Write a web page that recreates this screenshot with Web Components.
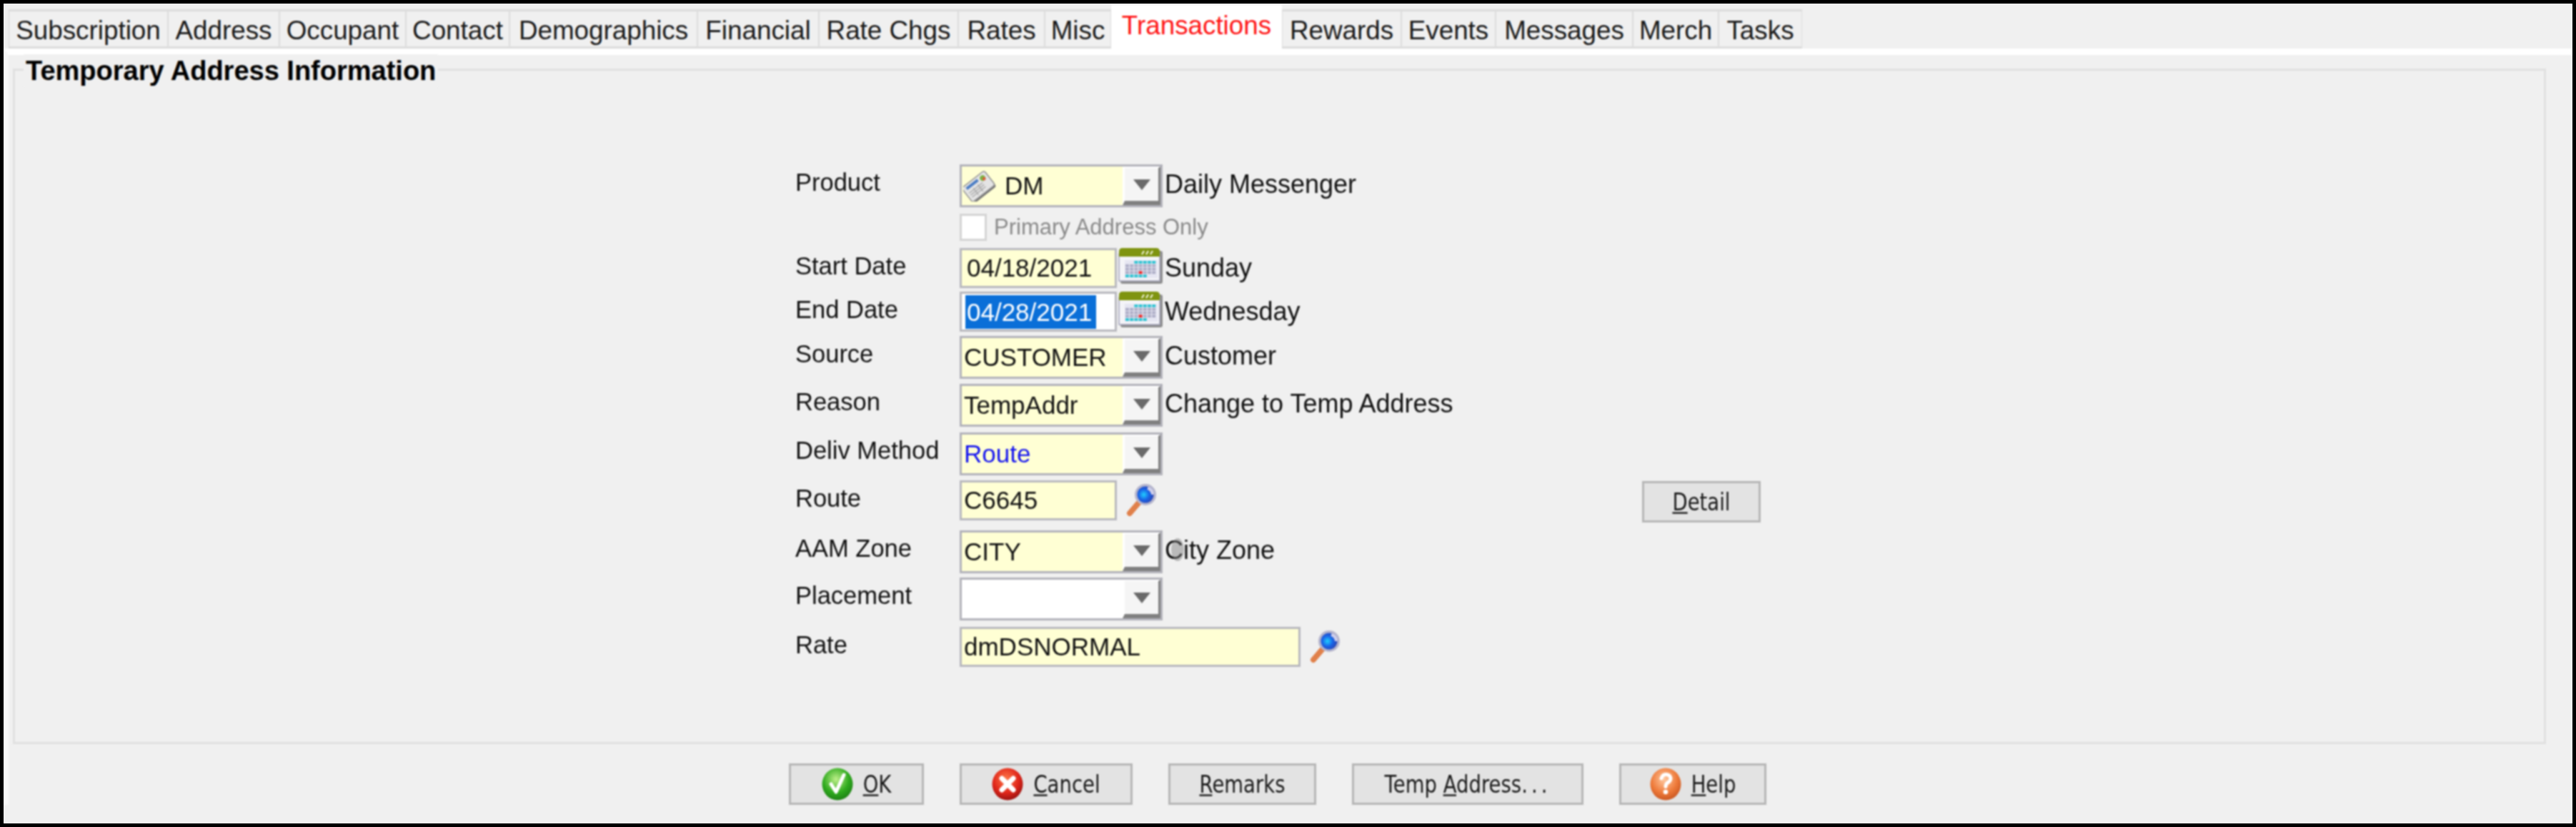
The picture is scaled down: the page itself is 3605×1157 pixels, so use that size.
<!DOCTYPE html>
<html>
<head>
<meta charset="utf-8">
<title>Temporary Address Information</title>
<style>
  html, body { margin: 0; padding: 0; height: 1157px; background: #000; overflow: hidden; }
  body { font-family: "Liberation Sans", Arial, sans-serif; color: #111; }
</style>
</head>
<body>
<sub-window>
  <tab-bar slot="tabs">
    <tab-item style="--w:223px">Subscription</tab-item>
    <tab-item style="--w:156px">Address</tab-item>
    <tab-item style="--w:177px">Occupant</tab-item>
    <tab-item style="--w:145px">Contact</tab-item>
    <tab-item style="--w:263px">Demographics</tab-item>
    <tab-item style="--w:170px">Financial</tab-item>
    <tab-item style="--w:195px">Rate Chgs</tab-item>
    <tab-item style="--w:121px">Rates</tab-item>
    <tab-item style="--w:93px">Misc</tab-item>
    <tab-item style="--w:239px" active>Transactions</tab-item>
    <tab-item style="--w:167px">Rewards</tab-item>
    <tab-item style="--w:132px">Events</tab-item>
    <tab-item style="--w:192px">Messages</tab-item>
    <tab-item style="--w:120px">Merch</tab-item>
    <tab-item style="--w:117px">Tasks</tab-item>
  </tab-bar>

  <group-box slot="body" title="Temporary Address Information">
    <form-row label="Product" style="--h:69px">
      <combo-box><news-icon slot="icon"></news-icon>DM</combo-box>
      <side-text>Daily Messenger</side-text>
    </form-row>
    <form-row style="--h:48px">
      <check-box>Primary Address Only</check-box>
    </form-row>
    <form-row label="Start Date" style="--h:61px">
      <text-field style="--fw:220px;--pad:7px">04/18/2021</text-field>
      <calendar-icon></calendar-icon>
      <side-text>Sunday</side-text>
    </form-row>
    <form-row label="End Date" style="--h:62px">
      <text-field style="--fw:220px" blank selected>04/28/2021</text-field>
      <calendar-icon></calendar-icon>
      <side-text>Wednesday</side-text>
    </form-row>
    <form-row label="Source" style="--h:67px">
      <combo-box>CUSTOMER</combo-box>
      <side-text>Customer</side-text>
    </form-row>
    <form-row label="Reason" style="--h:68px">
      <combo-box>TempAddr</combo-box>
      <side-text>Change to Temp Address</side-text>
    </form-row>
    <form-row label="Deliv Method" style="--h:67px">
      <combo-box style="--tc:#1414f0">Route</combo-box>
    </form-row>
    <form-row label="Route" style="--h:70px">
      <text-field style="--fw:220px">C6645</text-field>
      <lens-icon></lens-icon>
      <push-button slot="end" style="--bw:166px;--bh:58px"><u>D</u>etail</push-button>
    </form-row>
    <form-row label="AAM Zone" style="--h:66px">
      <combo-box>CITY</combo-box>
      <side-text ghost>City Zone</side-text>
    </form-row>
    <form-row label="Placement" style="--h:69px">
      <combo-box blank></combo-box>
    </form-row>
    <form-row label="Rate" style="--h:56px">
      <text-field style="--fw:477px">dmDSNORMAL</text-field>
      <lens-icon></lens-icon>
    </form-row>
  </group-box>

  <button-bar slot="body">
    <push-button style="--bw:189px"><state-icon slot="icon" kind="ok"></state-icon><u>O</u>K</push-button>
    <push-button style="--bw:242px"><state-icon slot="icon" kind="cancel"></state-icon><u>C</u>ancel</push-button>
    <push-button style="--bw:207px"><u>R</u>emarks</push-button>
    <push-button style="--bw:324px">Temp <u>A</u>ddress<span style="letter-spacing:5px">...</span></push-button>
    <push-button style="--bw:206px"><state-icon slot="icon" kind="help"></state-icon><u>H</u>elp</push-button>
  </button-bar>
</sub-window>

<script>
class SubWindow extends HTMLElement {
  constructor() {
    super();
    this.shadowDOM = this.attachShadow({mode: 'open'});
    this.shadowDOM.innerHTML = `
      <style>
        :host { display: block; width: 3605px; height: 1157px; box-sizing: border-box; border: 5px solid #000; background: #f0f0f0; overflow: hidden; }
        .wrap { height: 100%; filter: blur(0.8px); }
        .panel { border-top: 9px solid #fff; border-left: 7px solid #f8f8f8; }
      </style>
      <div class="wrap">
        <slot name="tabs"></slot>
        <div class="panel"><slot name="body"></slot></div>
      </div>
    `;
  }
}

class TabBar extends HTMLElement {
  constructor() {
    super();
    this.shadowDOM = this.attachShadow({mode: 'open'});
    this.shadowDOM.innerHTML = `
      <style>
        :host { display: flex; align-items: flex-end; height: 63px; padding-left: 7px; position: relative; z-index: 1; }
      </style>
      <slot></slot>
    `;
  }
}

class TabItem extends HTMLElement {
  constructor() {
    super();
    this.shadowDOM = this.attachShadow({mode: 'open'});
    this.shadowDOM.innerHTML = `
      <style>
        :host { display: block; box-sizing: border-box; width: var(--w); height: 55px; background: #f0f0f0; border: 1px solid #dcdcdc; border-top: 3px solid #dcdcdc; border-bottom: 3px solid #dcdcdc; font-size: 36.8px; line-height: 53px; text-align: center; white-space: nowrap; color: #1a1a1a; }
        :host([active]) { height: 70px; margin-bottom: -9px; background: #fff; border: 0; color: #ff1414; line-height: 58px; }
      </style>
      <slot></slot>
    `;
  }
}

class GroupBox extends HTMLElement {
  constructor() {
    super();
    this.shadowDOM = this.attachShadow({mode: 'open'});
    this.shadowDOM.innerHTML = `
      <style>
        :host { display: block; position: relative; box-sizing: border-box; width: 3545px; height: 945px; margin: 19px 0 0 6px; padding: 131px 0 0 1092px; border: 3px solid #e0e0e0; }
        .legend { position: absolute; left: 12px; top: -23px; padding: 0 3px; background: #f0f0f0; font-weight: bold; font-size: 38px; line-height: 46px; color: #000; white-space: nowrap; }
      </style>
      <div class="legend">${this.getAttribute('title')}</div>
      <slot></slot>
    `;
    this.removeAttribute('title');
  }
}

class FormRow extends HTMLElement {
  constructor() {
    super();
    this.shadowDOM = this.attachShadow({mode: 'open'});
    this.shadowDOM.innerHTML = `
      <style>
        :host { display: flex; align-items: flex-start; width: 1351px; height: var(--h); font-size: 34.5px; }
        .label { flex: 0 0 230px; line-height: 50px; color: #111; white-space: nowrap; }
        .fields { display: flex; align-items: flex-start; flex: 1; }
        .end { margin-left: auto; padding-top: 1px; }
      </style>
      <div class="label">${this.getAttribute('label') || ''}</div>
      <div class="fields"><slot></slot><div class="end"><slot name="end"></slot></div></div>
    `;
  }
}

class ComboBox extends HTMLElement {
  constructor() {
    super();
    this.shadowDOM = this.attachShadow({mode: 'open'});
    this.shadowDOM.innerHTML = `
      <style>
        :host { display: flex; box-sizing: border-box; width: 284px; height: 60px; border: 3px solid #b2b2ba; background: #ffffd4; color: var(--tc, #111); font-size: 35px; }
        :host([blank]) { background: #fff; }
        .value { flex: 1; display: flex; align-items: center; gap: 12px; padding-left: 3px; line-height: 54px; white-space: nowrap; min-width: 0; }
        ::slotted([slot=icon]) { margin-left: -1px; }
        .drop { box-sizing: border-box; flex: 0 0 53px; display: flex; align-items: center; justify-content: center; background: #f5f5f5; border-top: 2px solid #fff; border-left: 3px solid #fff; border-right: 3px solid #808080; border-bottom: 6px solid #808080; }
        .drop i { width: 0; height: 0; border-left: 12px solid transparent; border-right: 12px solid transparent; border-top: 15px solid #6a6a6a; }
      </style>
      <div class="value"><slot name="icon"></slot><span><slot></slot></span></div>
      <div class="drop"><i></i></div>
    `;
  }
}

class TextField extends HTMLElement {
  constructor() {
    super();
    this.shadowDOM = this.attachShadow({mode: 'open'});
    this.shadowDOM.innerHTML = `
      <style>
        :host { display: flex; align-items: center; box-sizing: border-box; width: var(--fw); height: 56px; border: 3px solid #b8b8be; background: #ffffd4; padding-left: var(--pad, 3px); white-space: nowrap; color: #111; font-size: 35px; }
        :host([blank]) { background: #fff; }
        :host([selected]) { padding-left: 5px; }
        :host([selected]) span { background: #0a6fd8; color: #fff; line-height: 47px; padding: 0 6px 0 2px; }
      </style>
      <span><slot></slot></span>
    `;
  }
}

class SideText extends HTMLElement {
  constructor() {
    super();
    this.shadowDOM = this.attachShadow({mode: 'open'});
    this.shadowDOM.innerHTML = `
      <style>
        :host { display: block; position: relative; margin-left: 3px; font-size: 36px; line-height: 56px; white-space: nowrap; color: #111; }
        .ghost { display: none; position: absolute; left: 9px; top: 11px; width: 18px; height: 32px; border-radius: 50%; background: rgba(120,120,120,.45); }
        :host([ghost]) .ghost { display: block; }
      </style>
      <slot></slot><div class="ghost"></div>
    `;
  }
}

class CheckBox extends HTMLElement {
  constructor() {
    super();
    this.shadowDOM = this.attachShadow({mode: 'open'});
    this.shadowDOM.innerHTML = `
      <style>
        :host { display: flex; align-items: center; gap: 10px; height: 38px; font-size: 31px; line-height: 38px; color: #8a8a8a; white-space: nowrap; }
        .box { box-sizing: border-box; width: 38px; height: 38px; background: #fff; border: 3px solid #d4d4d4; }
      </style>
      <div class="box"></div><slot></slot>
    `;
  }
}

class PushButton extends HTMLElement {
  constructor() {
    super();
    this.shadowDOM = this.attachShadow({mode: 'open'});
    this.shadowDOM.innerHTML = `
      <style>
        :host { display: flex; align-items: center; justify-content: center; gap: 14px; box-sizing: border-box; width: var(--bw); height: var(--bh, 58px); border: 3px solid #b6b6b6; background: #e3e3e3; font-family: "DejaVu Sans", sans-serif; font-size: 27.5px; color: #1a1a1a; white-space: nowrap; }
        .txt { display: inline-block; transform: scaleY(1.2); }
        .ic { display: contents; }
      </style>
      <span class="ic"><slot name="icon"></slot></span>
      <span class="txt"><slot></slot></span>
    `;
  }
}

class ButtonBar extends HTMLElement {
  constructor() {
    super();
    this.shadowDOM = this.attachShadow({mode: 'open'});
    this.shadowDOM.innerHTML = `
      <style>
        :host { display: flex; gap: 50px; margin-top: 27px; padding-left: 1092px; }
      </style>
      <slot></slot>
    `;
  }
}

// icons
class NewsIcon extends HTMLElement {
  constructor() {
    super();
    this.shadowDOM = this.attachShadow({mode: 'open'});
    this.shadowDOM.innerHTML = `
      <style>:host { display: block; width: 46px; height: 44px; flex: none; }</style>
      <svg width="46" height="44" viewBox="0 0 46 44">
        <g transform="rotate(-38 23 22)">
          <rect x="3" y="14" width="38" height="23" rx="3" fill="#777"/>
          <rect x="1" y="9" width="40" height="25" rx="3" fill="#e4e4e4" stroke="#909090" stroke-width="1.5"/>
          <rect x="6" y="12" width="20" height="4" fill="#4a7cc4"/>
          <circle cx="33" cy="16" r="4" fill="#7cb342"/>
          <circle cx="34" cy="18" r="2.2" fill="#e2553a"/>
          <path d="M5 21h24M5 24.500h24M5 28h24M14 19v12M22 19v12" stroke="#a8a8a8" stroke-width="1.400" fill="none"/>
        </g>
      </svg>
    `;
  }
}

class CalendarIcon extends HTMLElement {
  constructor() {
    super();
    this.shadowDOM = this.attachShadow({mode: 'open'});
    let cells = '';
    for (let r = 0; r < 5; r++) {
      for (let c = 0; c < 7; c++) {
        let fill = '#adadc6';
        if (r === 0 && c < 2) continue;
        if (r === 4 && c > 4) continue;
        if (r === 0 || r === 4) fill = '#2cc4d2';
        if (r === 3 && c === 3) fill = '#ee2222';
        cells += `<rect x="${10 + c * 6.2}" y="${18 + r * 4.8}" width="5" height="3.8" fill="${fill}"/>`;
      }
    }
    this.shadowDOM.innerHTML = `
      <style>:host { display: block; width: 62px; height: 50px; flex: none; margin-left: 2px; }</style>
      <svg width="62" height="50" viewBox="0 0 62 50">
        <rect x="3" y="4" width="59" height="46" rx="3" fill="#8e8e8e"/>
        <rect x="1" y="8" width="57" height="38" fill="#f4f4f8" stroke="#a4a4bc" stroke-width="1.500"/>
        <path d="M1 12v-7q0-5 5-5h47q5 0 5 5v7z" fill="#7f9410"/>
        <path d="M33 9l3-5M39 9l3-5M45 9l3-5" stroke="#e8eccc" stroke-width="2.400"/>
        <rect x="9" y="17" width="46" height="25" fill="#e6e6f2"/>
        ${cells}
      </svg>
    `;
  }
}

class LensIcon extends HTMLElement {
  constructor() {
    super();
    this.shadowDOM = this.attachShadow({mode: 'open'});
    const id = 'g' + Math.random().toString(36).slice(2);
    this.shadowDOM.innerHTML = `
      <style>:host { display: block; width: 44px; height: 46px; flex: none; margin: 5px 0 0 13px; }</style>
      <svg width="44" height="46" viewBox="0 0 44 46">
        <defs><radialGradient id="${id}" cx="40%" cy="50%" r="65%">
          <stop offset="0" stop-color="#20d0ff"/><stop offset=".5" stop-color="#1a62e6"/><stop offset="1" stop-color="#3040a8"/>
        </radialGradient></defs>
        <path d="M5 41L17 27" stroke="#e0804a" stroke-width="8" stroke-linecap="round"/>
        <circle cx="27" cy="15" r="15" fill="#b4b4cc"/>
        <circle cx="27" cy="15" r="11.500" fill="url(#${id})"/>
        <path d="M30 6a10 10 0 0 1 7 9" stroke="#d0d0ec" stroke-width="4" fill="none"/>
      </svg>
    `;
  }
}

class StateIcon extends HTMLElement {
  constructor() {
    super();
    this.shadowDOM = this.attachShadow({mode: 'open'});
    const kind = this.getAttribute('kind');
    const colors = {
      ok: ['#bff08a', '#2faa1e', '#1c7a14'],
      cancel: ['#ff7a4a', '#e0261a', '#8e1010'],
      help: ['#ffc9a0', '#ee7a3a', '#c4521e']
    }[kind];
    const marks = {
      ok: '<path d="M13 23l7 11L31 10" fill="none" stroke="#fff" stroke-width="5" stroke-linecap="round" stroke-linejoin="round"/>',
      cancel: '<path d="M14 15l16 16M30 15L14 31" fill="none" stroke="#fff" stroke-width="7" stroke-linecap="round"/>',
      help: '<path d="M16 15q2-6 7-5.500t6 5q0 4-3.500 6t-3.500 6" fill="none" stroke="#fff" stroke-width="5" stroke-linecap="round"/><circle cx="22" cy="34" r="3.300" fill="#fff"/>'
    }[kind];
    const id = 'g' + kind;
    this.shadowDOM.innerHTML = `
      <style>:host { display: block; width: 44px; height: 46px; flex: none; }</style>
      <svg width="44" height="46" viewBox="0 0 44 46">
        <defs><radialGradient id="${id}" cx="45%" cy="35%" r="70%">
          <stop offset="0" stop-color="${colors[0]}"/><stop offset=".6" stop-color="${colors[1]}"/><stop offset="1" stop-color="${colors[2]}"/>
        </radialGradient></defs>
        <ellipse cx="22" cy="23" rx="21.500" ry="22.500" fill="url(#${id})"/>
        ${marks}
      </svg>
    `;
  }
}

customElements.define('sub-window', SubWindow);
customElements.define('tab-bar', TabBar);
customElements.define('tab-item', TabItem);
customElements.define('group-box', GroupBox);
customElements.define('form-row', FormRow);
customElements.define('combo-box', ComboBox);
customElements.define('text-field', TextField);
customElements.define('side-text', SideText);
customElements.define('check-box', CheckBox);
customElements.define('push-button', PushButton);
customElements.define('button-bar', ButtonBar);
customElements.define('news-icon', NewsIcon);
customElements.define('calendar-icon', CalendarIcon);
customElements.define('lens-icon', LensIcon);
customElements.define('state-icon', StateIcon);
</script>
</body>
</html>
